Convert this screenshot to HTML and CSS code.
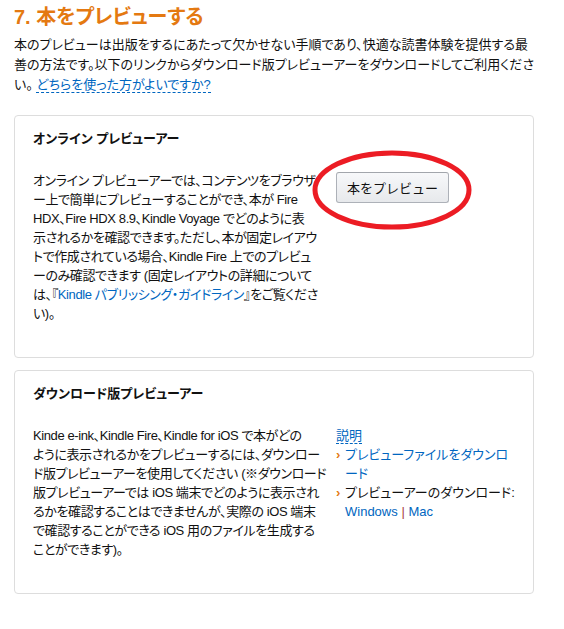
FILE: index.html
```html
<!DOCTYPE html>
<html lang="ja">

<head>
    <meta charset="UTF-8" />
    <meta name="viewport" content="width=device-width, initial-scale=1.0" />
    <title>本をプレビューする</title>
    <link rel="stylesheet" href="styles.css">
</head>

<body>
    <div class="page">
        <h2 class="step-title">7. 本をプレビューする</h2>
        <p class="intro">本のプレビューは出版をするにあたって欠かせない手順であり、快適な読書体験を提供する最善の方法です。以下のリンクからダウンロード版プレビューアーをダウンロードしてご利用ください。 <a href="#" class="help-link">どちらを使った方がよいですか?</a></p>

        <div class="box">
            <h3>オンライン プレビューアー</h3>
            <div class="box-row">
                <p class="box-text">オンライン プレビューアーでは、コンテンツをブラウザ<br>ー上で簡単にプレビューすることができ、本が Fire<br>HDX、Fire HDX 8.9、Kindle Voyage でどのように表<br>示されるかを確認できます。ただし、本が固定レイアウ<br>トで作成されている場合、Kindle Fire 上でのプレビュ<br>ーのみ確認できます (固定レイアウトの詳細について<br>は、『<a href="#">Kindle パブリッシング・ガイドライン</a>』をご覧くださ<br>い)。</p>
                <div class="box-side">
                    <div class="btn-wrap">
                        <button class="btn">本をプレビュー</button>
                        <svg class="circle-mark" width="164" height="84" viewBox="0 0 164 84">
                            <ellipse cx="81" cy="41" rx="77" ry="37" fill="none" stroke="#ec1c24" stroke-width="5" />
                        </svg>
                    </div>
                </div>
            </div>
        </div>

        <div class="box">
            <h3>ダウンロード版プレビューアー</h3>
            <div class="box-row">
                <p class="box-text">Kinde e-ink、Kindle Fire、Kindle for iOS で本がどの<br>ように表示されるかをプレビューするには、ダウンロー<br>ド版プレビューアーを使用してください (※ダウンロード<br>版プレビューアーでは iOS 端末でどのように表示され<br>るかを確認することはできませんが、実際の iOS 端末<br>で確認することができる iOS 用のファイルを生成する<br>ことができます)。</p>
                <div class="box-side">
                    <a href="#" class="help-link">説明</a>
                    <ul class="links">
                        <li><a href="#">プレビューファイルをダウンロード</a></li>
                        <li>プレビューアーのダウンロード: <a href="#">Windows</a> <span class="sep">|</span> <a href="#">Mac</a></li>
                    </ul>
                </div>
            </div>
        </div>
    </div>
</body>

</html>
```

FILE: styles.css
```css
body {
    margin: 0;
    font-family: "Liberation Sans", "Noto Sans CJK JP", sans-serif;
    font-size: 13px;
    font-feature-settings: "palt";
    color: #111;
    background: #fff;
}

a {
    color: #0066c0;
    text-decoration: none;
}

.page {
    width: 520px;
    margin-left: 14px;
}

.step-title {
    margin: 4px 0 5px;
    font-size: 20px;
    line-height: 26px;
    color: #e47911;
}

.intro {
    margin: 0 0 20px;
    line-height: 20px;
}

.help-link {
    border-bottom: 1px dashed #0066c0;
}

.box {
    border: 1px solid #ddd;
    border-radius: 4px;
    padding: 13px 18px 34px;
    margin-bottom: 12px;
}

.box h3 {
    margin: 0 0 23px;
    font-size: 13px;
    line-height: 19px;
}

.box-row {
    display: grid;
    grid-template-columns: 293px 1fr;
    gap: 10px;
}

.box-text {
    margin: 0;
    line-height: 19px;
    letter-spacing: -0.4px;
    white-space: nowrap;
}

.box-side {
    line-height: 19px;
}

.btn-wrap {
    position: relative;
    display: inline-block;
    margin-top: 1px;
}

.btn {
    width: 113px;
    height: 31px;
    font-family: inherit;
    font-size: 13px;
    color: #111;
    background: linear-gradient(#f7f8fa, #e7e9ec);
    border: 1px solid #adb1b8;
    border-top-color: #a2a6ac;
    border-radius: 3px;
    cursor: pointer;
}

.circle-mark {
    position: absolute;
    left: -25px;
    top: -23px;
    pointer-events: none;
}

.links {
    list-style: none;
    margin: 0;
    padding: 0 0 0 9px;
}

.links li::before {
    content: "›";
    display: inline-block;
    width: 9px;
    margin-left: -9px;
    color: #e47911;
    font-weight: bold;
}

.sep {
    color: #a94442;
}
```
